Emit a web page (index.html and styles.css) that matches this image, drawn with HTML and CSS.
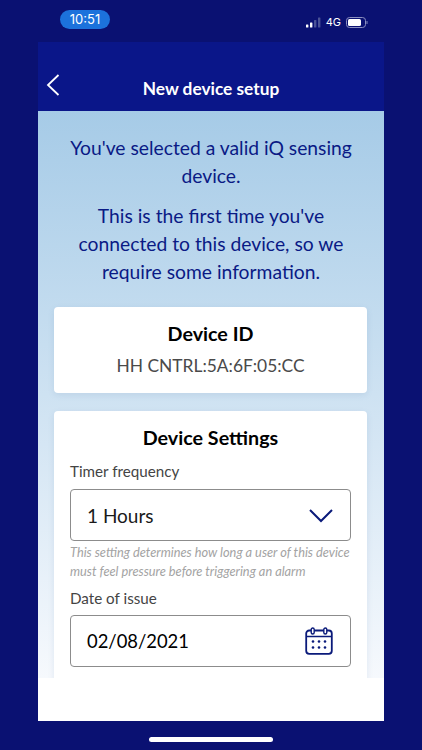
FILE: index.html
```html
<!DOCTYPE html>
<html lang="en">
<head>
    <meta charset="UTF-8">
    <meta name="viewport" content="width=device-width, initial-scale=1.0">
    <title>New device setup</title>
    <link rel="stylesheet" href="styles.css">
</head>
<body>

    <!-- Status bar -->
    <div class="status-bar">
        <span class="clock">10:51</span>
        <div class="status-icons">
            <svg class="signal" width="15" height="11" viewBox="0 0 15 11">
                <rect x="0" y="7.5" width="2.4" height="3" rx="0.5" fill="#fff"/>
                <rect x="4" y="5.5" width="2.4" height="5" rx="0.5" fill="#fff"/>
                <rect x="8" y="3" width="2.4" height="7.5" rx="0.5" fill="#4a5296"/>
                <rect x="12" y="0.5" width="2.4" height="10" rx="0.5" fill="#4a5296"/>
            </svg>
            <span class="network">4G</span>
            <svg class="battery" width="22" height="11" viewBox="0 0 22 11">
                <rect x="0.5" y="0.5" width="19" height="10" rx="3" fill="none" stroke="#8a8fc0"/>
                <rect x="2" y="2" width="13" height="7" rx="1.5" fill="#fff"/>
                <rect x="20.5" y="4" width="1" height="3" rx="0.5" fill="#8a8fc0"/>
            </svg>
        </div>
    </div>

    <!-- App window -->
    <div class="app">
        <div class="header">
            <svg class="back" width="14" height="24" viewBox="0 0 14 24">
                <path d="M12.5 2 L2 12 L12.5 22" fill="none" stroke="#fff" stroke-width="1.8"/>
            </svg>
            <span class="title">New device setup</span>
        </div>

        <div class="content">
            <p class="intro">You've selected a valid iQ sensing device.</p>
            <p class="intro second">This is the first time you've connected to this device, so we require some information.</p>

            <div class="card id-card">
                <h2>Device ID</h2>
                <div class="device-id">HH CNTRL:5A:6F:05:CC</div>
            </div>

            <div class="card settings-card">
                <h2>Device Settings</h2>
                <label class="field-label">Timer frequency</label>
                <div class="field">
                    <span>1 Hours</span>
                    <svg width="26" height="15" viewBox="0 0 26 15">
                        <path d="M2 2 L13 13 L24 2" fill="none" stroke="#0a1a7a" stroke-width="2"/>
                    </svg>
                </div>
                <p class="hint">This setting determines how long a user of this device must feel pressure before triggering an alarm</p>
                <label class="field-label date-label">Date of issue</label>
                <div class="field date-field">
                    <span>02/08/2021</span>
                    <svg width="28" height="28" viewBox="0 0 28 28">
                        <rect x="1.2" y="3.5" width="25.6" height="23.3" rx="3" fill="none" stroke="#0a1a7a" stroke-width="1.8"/>
                        <path d="M1.2 9.5 H26.8" stroke="#0a1a7a" stroke-width="1.5"/>
                        <rect x="6.2" y="1" width="3" height="6" rx="1.5" fill="#fff" stroke="#0a1a7a" stroke-width="1.4"/>
                        <rect x="18.8" y="1" width="3" height="6" rx="1.5" fill="#fff" stroke="#0a1a7a" stroke-width="1.4"/>
                        <g fill="#0a1a7a">
                            <circle cx="8" cy="14.5" r="1.3"/><circle cx="14" cy="14.5" r="1.3"/><circle cx="20" cy="14.5" r="1.3"/>
                            <circle cx="8" cy="20.5" r="1.3"/><circle cx="14" cy="20.5" r="1.3"/><circle cx="20" cy="20.5" r="1.3"/>
                        </g>
                    </svg>
                </div>
            </div>
        </div>

        <div class="footer"></div>
    </div>

    <div class="home-bar"></div>

</body>
</html>
```

FILE: styles.css
```css
/* General Styles */
body {
    font-family: 'Lato', sans-serif;
    margin: 0;
    padding: 0;
    width: 422px;
    height: 750px;
    overflow: hidden;
    background: #0a1172;
}

/* Status bar */
.status-bar {
    height: 42px;
    box-sizing: border-box;
    padding: 10px 54px 0 60px;
    display: flex;
    justify-content: space-between;
    align-items: flex-start;
}

.clock {
    width: 50px;
    height: 19px;
    line-height: 19px;
    background: #1c72dc;
    border-radius: 10px;
    color: #fff;
    font-family: 'Inter', sans-serif;
    font-size: 13px;
    text-align: center;
}

.status-icons {
    display: flex;
    align-items: center;
    gap: 5px;
    margin-top: 6px;
}

.network {
    color: #fff;
    font-family: 'Inter', sans-serif;
    font-size: 11px;
    line-height: 12px;
}

/* App window */
.app {
    width: 346px;
    margin-left: 38px;
    display: flex;
    flex-direction: column;
}

.header {
    height: 69px;
    background: #0a1689;
    box-sizing: border-box;
    position: relative;
    color: #fff;
    text-align: center;
}

.back {
    position: absolute;
    left: 8px;
    top: 31px;
}

.title {
    display: block;
    padding-top: 36px;
    font-size: 17.3px;
    font-weight: 700;
    line-height: 21px;
}

.content {
    height: 567px;
    overflow: hidden;
    box-sizing: border-box;
    padding: 23px 16px 0;
    background: linear-gradient(180deg, #a6cbe7 0%, #f6f9fd 100%);
}

.intro {
    margin: 0;
    color: #0a1a85;
    font-size: 19.3px;
    line-height: 28px;
    text-align: center;
}

.intro.second {
    margin-top: 12px;
}

.card {
    width: 313px;
    background: #fff;
    border-radius: 4px;
    box-sizing: border-box;
    text-align: center;
    box-shadow: 0 2px 6px rgba(70, 110, 160, 0.12);
}

.card h2 {
    margin: 0;
    color: #000;
    font-size: 19.7px;
    font-weight: 700;
    line-height: 24px;
}

.id-card {
    height: 86px;
    margin-top: 21px;
    padding-top: 15px;
}

.device-id {
    margin-top: 9px;
    color: #4a4a4a;
    font-size: 17.4px;
    line-height: 22px;
}

.settings-card {
    margin-top: 18px;
    height: 300px;
    padding: 15px 16px 0;
}

.field-label {
    display: block;
    margin-top: 12px;
    color: #444;
    font-size: 15.2px;
    line-height: 19px;
    text-align: left;
}

.field {
    height: 52px;
    margin-top: 8px;
    box-sizing: border-box;
    border: 1.5px solid #8c8c8c;
    border-radius: 4px;
    padding: 0 16px;
    display: flex;
    justify-content: space-between;
    align-items: center;
    color: #1a1a1a;
    font-size: 19px;
}

.date-field {
    margin-top: 7px;
    padding: 0 17px 0 16px;
    color: #000;
    font-size: 18.4px;
}

.hint {
    margin: 2px 0 0;
    color: #a3a3a3;
    font-size: 12.8px;
    font-style: italic;
    line-height: 19px;
    text-align: left;
}

.field-label.date-label {
    margin-top: 8px;
}

.footer {
    height: 43px;
    background: #fff;
}

.home-bar {
    width: 124px;
    height: 5px;
    margin: 16px auto 0;
    background: #fff;
    border-radius: 3px;
}
```
